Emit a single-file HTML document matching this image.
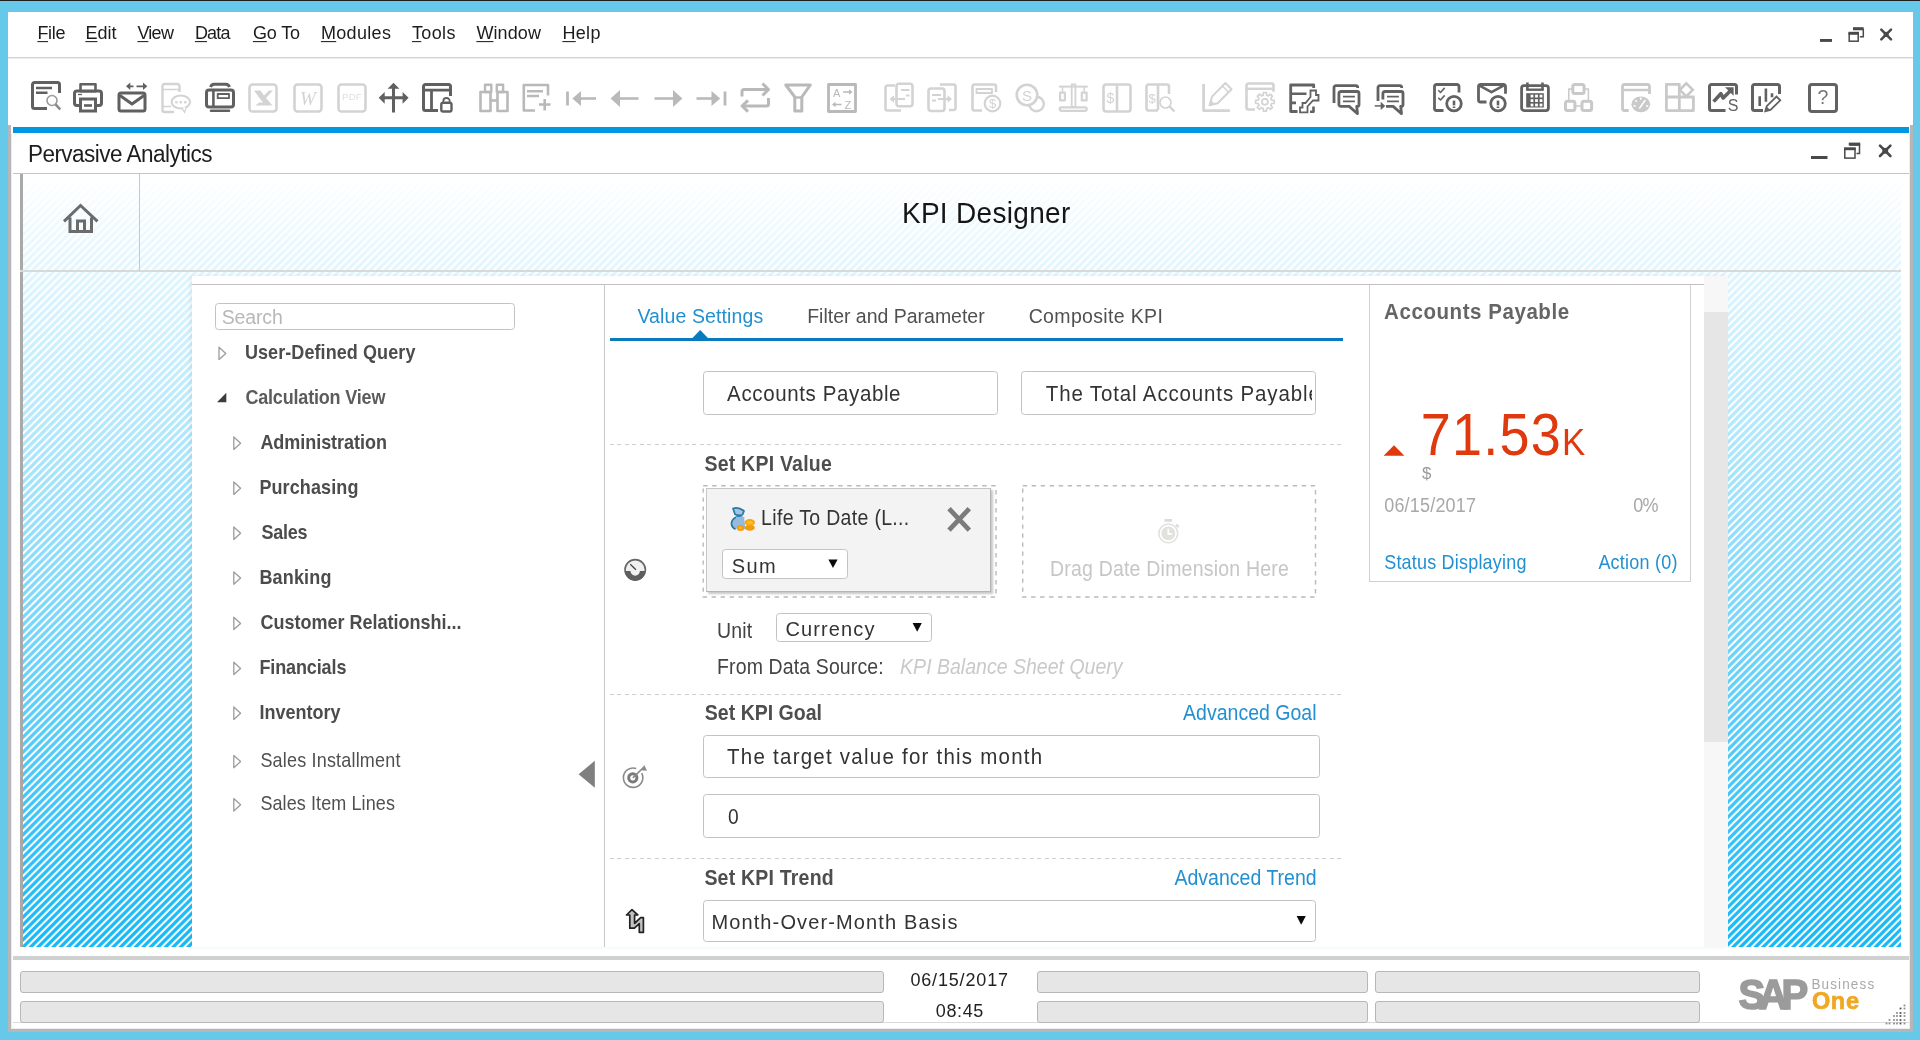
<!DOCTYPE html>
<html><head><meta charset="utf-8"><title>KPI Designer</title>
<style>
html,body{margin:0;padding:0}
body{width:1920px;height:1040px;overflow:hidden;background:#66c9ea;font-family:"Liberation Sans",sans-serif;position:relative}
.a{position:absolute}
.t{position:absolute;white-space:pre;line-height:1}
.t u{text-decoration:underline;text-decoration-thickness:1.2px;text-underline-offset:1.6px}
.ti{position:absolute}
.in{position:absolute;box-sizing:border-box;border:1.5px solid #c3c3c3;border-radius:3.5px;background:#fff}
.bar{position:absolute;box-sizing:border-box;border:1.8px solid #b5b7b9;border-radius:3px;background:#e6e6e6}
.dl{position:absolute;left:609.5px;width:733.5px;height:1px;background:repeating-linear-gradient(90deg,#cfcfcf 0,#cfcfcf 3.6px,rgba(255,255,255,0) 3.6px,rgba(255,255,255,0) 7.5px)}
#client{left:20px;top:174px;width:1881px;height:773px;background:repeating-linear-gradient(135deg,#fff 0,#fff .5px,rgba(255,255,255,0) 1.55px,rgba(255,255,255,0) 3.75px,#fff 4.8px,#fff 5.303px),linear-gradient(to bottom,#ffffff 0,#14b9f8 100%)}
</style></head><body>
<div class="a" style="left:0;top:0;width:1920px;height:1px;background:#1e1e1e"></div>
<div class="a" style="left:8px;top:12px;width:1905px;height:1020px;background:#fff"></div>
<div class="a" style="left:8px;top:57px;width:1905px;height:1px;background:#d3d3d3"></div>
<div class="a" style="left:8px;top:58px;width:1905px;height:1px;background:#ededed"></div>
<!-- window gray borders -->
<div class="a" style="left:8px;top:125px;width:3px;height:907px;background:#b6b6b6"></div>
<div class="a" style="left:11px;top:134px;width:1px;height:895px;background:#ececec"></div>
<div class="a" style="left:1910px;top:125px;width:3px;height:907px;background:#b6b6b6"></div>
<div class="a" style="left:1909px;top:134px;width:1px;height:895px;background:#ececec"></div>
<div class="a" style="left:8px;top:1029px;width:1905px;height:3px;background:#b6b6b6"></div>
<div class="a" style="left:11px;top:1028px;width:1899px;height:1px;background:#ececec"></div>
<!-- blue line + title line -->
<div class="a" style="left:12.500px;top:127.300px;width:1896px;height:6px;background:#0098e1"></div>
<div class="a" style="left:12.500px;top:173px;width:1896px;height:1px;background:#c4c4c4"></div>
<!-- client hatch -->
<div class="a" id="client"></div>
<div class="a" style="left:20px;top:174px;width:3px;height:773px;background:#a9a9a9"></div>
<div class="a" style="left:20px;top:270px;width:1881px;height:1.500px;background:#d9d9d9"></div>
<div class="a" style="left:139px;top:174px;width:1.200px;height:96px;background:#c8c8c8"></div>
<!-- home icon -->
<svg class="a" style="left:60px;top:200px" width="42" height="38" viewBox="60 200 42 38"><path d="M64 221.300L80.500 205.500 97.500 221.300M70 217.500V231.500H91.500V217.500M77.500 231.500V221H84.500V231.500" fill="none" stroke="#6b6b6b" stroke-width="3"/></svg>
<!-- panel -->
<div class="a" style="left:192px;top:276px;width:1536px;height:671px;background:#fff;box-shadow:-2px 0 4px rgba(0,60,90,.08)"></div>
<div class="a" style="left:192px;top:283.500px;width:1512px;height:1.500px;background:#c1c1c1"></div>
<div class="a" style="left:603.500px;top:285px;width:1.500px;height:662px;background:#c9c9c9"></div>
<div class="a" style="left:1704px;top:276px;width:24px;height:671px;background:#f7f7f7"></div>
<div class="a" style="left:1704px;top:312px;width:24px;height:430px;background:#e6e6e6"></div>
<!-- search -->
<div class="in" style="left:215px;top:303px;width:300px;height:27px"></div>
<svg class="a" style="left:214px;top:340px" width="32" height="475" viewBox="214 340 32 475"><path d="M219 347.2V359.6L225.8 353.4z" fill="#fff" stroke="#9c9c9c" stroke-width="1.3" stroke-linejoin="round"/><path d="M226.3 392.800V402.200H217z" fill="#3c3c3c"/><path d="M233.8 437.0V449.4L240.6 443.2z" fill="#fff" stroke="#9c9c9c" stroke-width="1.3" stroke-linejoin="round"/><path d="M233.8 482.0V494.4L240.6 488.2z" fill="#fff" stroke="#9c9c9c" stroke-width="1.3" stroke-linejoin="round"/><path d="M233.8 527.0V539.4L240.6 533.2z" fill="#fff" stroke="#9c9c9c" stroke-width="1.3" stroke-linejoin="round"/><path d="M233.8 571.9V584.3L240.6 578.1z" fill="#fff" stroke="#9c9c9c" stroke-width="1.3" stroke-linejoin="round"/><path d="M233.8 617.2V629.6L240.6 623.4z" fill="#fff" stroke="#9c9c9c" stroke-width="1.3" stroke-linejoin="round"/><path d="M233.8 662.2V674.6L240.6 668.4z" fill="#fff" stroke="#9c9c9c" stroke-width="1.3" stroke-linejoin="round"/><path d="M233.8 707.0V719.4L240.6 713.2z" fill="#fff" stroke="#9c9c9c" stroke-width="1.3" stroke-linejoin="round"/><path d="M233.8 755.4V767.8L240.6 761.6z" fill="#fff" stroke="#9c9c9c" stroke-width="1.3" stroke-linejoin="round"/><path d="M233.8 798.6V811.0L240.6 804.8z" fill="#fff" stroke="#9c9c9c" stroke-width="1.3" stroke-linejoin="round"/></svg>
<!-- collapse arrow -->
<svg class="a" style="left:576px;top:758px" width="22" height="32" viewBox="576 758 22 32"><path d="M578.600 774.300L594.800 760.800V787.800z" fill="#7f7f7f"/></svg>
<!-- tabs underline -->
<div class="a" style="left:609.500px;top:337.500px;width:733.500px;height:3px;background:#0a7abf"></div>
<svg class="a" style="left:690px;top:328px" width="22" height="12" viewBox="690 328 22 12"><path d="M692 338.500L700.200 330 708.400 338.500z" fill="#0a7abf"/></svg>
<!-- inputs -->
<div class="in" style="left:703px;top:371px;width:295px;height:44px"></div>
<div class="in" style="left:1020.800px;top:371px;width:295px;height:44px"></div>
<div class="dl" style="top:444px"></div>
<!-- dashed boxes -->
<svg class="a" style="left:700px;top:483px" width="620" height="118" viewBox="700 483 620 118"><g fill="none" stroke="#bababa" stroke-width="1.400" stroke-dasharray="4.400 4.600"><rect x="703.200" y="485.800" width="292.800" height="111.200"/><rect x="1022.700" y="485.800" width="292.800" height="111.200"/></g></svg>
<div class="a" style="left:706px;top:488px;width:284.500px;height:103.500px;box-sizing:border-box;background:#f3f3f3;border:1.500px solid #c6c6c6;border-right-color:#b4b4b4;border-bottom-color:#b4b4b4;box-shadow:1.500px 1.500px 2px rgba(0,0,0,.22)"></div>
<div class="in" style="left:722.300px;top:549.200px;width:125.400px;height:29.500px"></div>
<div class="in" style="left:776px;top:612.700px;width:155.700px;height:29px"></div>
<div class="dl" style="top:693.500px"></div>
<div class="in" style="left:703px;top:734.600px;width:616.700px;height:43px"></div>
<div class="in" style="left:703px;top:794px;width:616.700px;height:43.500px"></div>
<div class="dl" style="top:858.200px"></div>
<div class="in" style="left:703px;top:899.700px;width:612.800px;height:42.700px"></div>
<svg class="a" style="left:826px;top:557px" width="14" height="14" viewBox="826 557 14 14"><path d="M828.4 559.4H837.6L833.00 568.1z" fill="#0a0a0a"/></svg>
<svg class="a" style="left:910px;top:621px" width="14" height="14" viewBox="910 621 14 14"><path d="M912.6 623H921.8L917.20 631.7z" fill="#0a0a0a"/></svg>
<svg class="a" style="left:1294px;top:914px" width="14" height="14" viewBox="1294 914 14 14"><path d="M1296.6 916H1305.8L1301.20 924.7z" fill="#0a0a0a"/></svg>
<svg class="a" style="left:944px;top:504px" width="30" height="31" viewBox="944 504 30 31"><path d="M949 508.700L969.300 530.200M969.300 508.700L949 530.200" stroke="#7b7b7b" stroke-width="4.800" fill="none"/></svg>
<svg class="a" style="left:622px;top:557px" width="27" height="27" viewBox="622 557 27 27"><circle cx="635.200" cy="569.800" r="10.200" fill="#f0f0f0" stroke="#666" stroke-width="1.600"/>
<path d="M625.300 571h5.200a4.700 4.700 0 0 0 9.400 0h5.200a9.900 9.900 0 0 1-19.800 0z" fill="#5e5e5e"/>
<path d="M630.300 564.300l5.600 5.400" stroke="#444" stroke-width="1.300" fill="none"/></svg>
<svg class="a" style="left:620px;top:762px" width="30" height="28" viewBox="620 762 30 28"><path d="M641.700 773.200a9.700 9.700 0 1 1-5.500-4.700" fill="none" stroke="#8a8a8a" stroke-width="1.600"/>
<circle cx="632.800" cy="777.800" r="4.100" fill="none" stroke="#7a7a7a" stroke-width="3"/>
<path d="M632.800 777.800L643.500 767.500" stroke="#8a8a8a" stroke-width="1.600" fill="none"/><path d="M644.300 765l2.700 5.700-6-.5z" fill="#8a8a8a"/></svg>
<svg class="a" style="left:623px;top:906px" width="24" height="30" viewBox="623 906 24 30"><path d="M632 909.700L637.800 915H634.600V923.300L640.600 917.700H643.400V932.300H639.300V923.600L634.400 928.200H629.800V915H626.500z" fill="#c2c2c2" stroke="#222" stroke-width="1.700" stroke-linejoin="round"/></svg>
<svg class="a" style="left:728px;top:504px" width="30" height="30" viewBox="728 504 30 30"><path d="M733 508.500q5.500-2 11 2.500l-1.500 3.700q-4 1.500-7.500-.5z" fill="#a3c3e2" stroke="#2878a6" stroke-width="1.700" stroke-linejoin="round"/>
<path d="M744 518.200q-2.500-2-7.500-1.200-5.500 2.500-5 7.500.5 3 4 4.800" fill="#96badd" stroke="#2878a6" stroke-width="1.700"/>
<path d="M736 517h8l1.500 12h-9z" fill="#96badd"/>
<ellipse cx="749.800" cy="527.700" rx="5" ry="3" fill="#f29a0e"/><ellipse cx="749.800" cy="522.400" rx="5.200" ry="3.400" fill="#f7a614"/><ellipse cx="749.800" cy="522.600" rx="3" ry="1.700" fill="#fcc419"/>
<ellipse cx="740.600" cy="528" rx="3.800" ry="2.900" fill="#f49c0e"/><ellipse cx="740.300" cy="528" rx="1.500" ry="1.200" fill="#fcc419"/></svg>
<svg class="a" style="left:1155px;top:516px" width="27" height="28" viewBox="1155 516 27 28"><circle cx="1168.300" cy="533.400" r="9.400" fill="none" stroke="#e1e1dd" stroke-width="1.600"/><circle cx="1168.300" cy="533.400" r="6.900" fill="#e1e1dd"/>
<rect x="1164.400" y="519" width="7.600" height="2.800" fill="#dcdcd7"/><path d="M1176 524.500l2.600 2.600" stroke="#dcdcd7" stroke-width="2.400"/>
<path d="M1168.300 528.700v5.200h3.800" fill="none" stroke="#fff" stroke-width="1.800"/></svg>
<!-- KPI card -->
<div class="a" style="left:1368.500px;top:285px;width:322.500px;height:297px;box-sizing:border-box;border:1.500px solid #d0d0d0;border-top:none"></div>
<svg class="a" style="left:1380px;top:442px" width="28" height="16" viewBox="1380 442 28 16"><path d="M1383.600 455.700H1404.400L1394 445.300z" fill="#e0390d"/></svg>
<!-- status area -->
<div class="a" style="left:12.500px;top:955.500px;width:1896.500px;height:4.500px;background:#cfd1d1"></div>
<div class="a" style="left:12.500px;top:1022px;width:1896px;height:1px;background:#dadada"></div>
<div class="bar" style="left:20px;top:971px;width:863.500px;height:21.700px"></div>
<div class="bar" style="left:20px;top:1001px;width:863.500px;height:21.700px"></div>
<div class="bar" style="left:1037px;top:971px;width:331px;height:21.700px"></div>
<div class="bar" style="left:1037px;top:1001px;width:331px;height:21.700px"></div>
<div class="bar" style="left:1374.600px;top:971px;width:325px;height:21.700px"></div>
<div class="bar" style="left:1374.600px;top:1001px;width:325px;height:21.700px"></div>
<svg class="a" style="left:1884px;top:1003px" width="24" height="24" viewBox="1884 1003 24 24"><rect x="1903.6" y="1004.6" width="1.800" height="1.800" fill="#333" opacity="0.55"/><rect x="1899.6" y="1007.6" width="1.800" height="1.800" fill="#333" opacity="0.85"/><rect x="1903.6" y="1007.6" width="1.800" height="1.800" fill="#333" opacity="0.55"/><rect x="1896.1" y="1012.1" width="1.800" height="1.800" fill="#333" opacity="0.55"/><rect x="1899.6" y="1012.1" width="1.800" height="1.800" fill="#333" opacity="0.85"/><rect x="1903.6" y="1012.1" width="1.800" height="1.800" fill="#333" opacity="0.55"/><rect x="1893.1" y="1015.1" width="1.800" height="1.800" fill="#333" opacity="0.55"/><rect x="1896.1" y="1015.1" width="1.800" height="1.800" fill="#333" opacity="0.55"/><rect x="1899.6" y="1015.1" width="1.800" height="1.800" fill="#333" opacity="0.85"/><rect x="1903.6" y="1015.1" width="1.800" height="1.800" fill="#333" opacity="0.55"/><rect x="1888.6" y="1019.1" width="1.800" height="1.800" fill="#333" opacity="0.55"/><rect x="1893.1" y="1019.1" width="1.800" height="1.800" fill="#333" opacity="0.55"/><rect x="1896.1" y="1019.1" width="1.800" height="1.800" fill="#333" opacity="0.55"/><rect x="1899.6" y="1019.1" width="1.800" height="1.800" fill="#333" opacity="0.85"/><rect x="1903.6" y="1019.1" width="1.800" height="1.800" fill="#333" opacity="0.55"/><rect x="1885.6" y="1022.6" width="1.800" height="1.800" fill="#333" opacity="0.55"/><rect x="1888.6" y="1022.6" width="1.800" height="1.800" fill="#333" opacity="0.55"/><rect x="1893.1" y="1022.6" width="1.800" height="1.800" fill="#333" opacity="0.55"/><rect x="1896.1" y="1022.6" width="1.800" height="1.800" fill="#333" opacity="0.55"/><rect x="1899.6" y="1022.6" width="1.800" height="1.800" fill="#333" opacity="0.85"/><rect x="1903.6" y="1022.6" width="1.800" height="1.800" fill="#333" opacity="0.55"/></svg>
<svg class="a" style="left:1816px;top:24px" width="80" height="20" viewBox="1816 24 80 20"><rect x="1820" y="39" width="12" height="2.900" fill="#494949"/>
<path d="M1853.300 29.500h10v7.200h-3.500" fill="none" stroke="#494949" stroke-width="1.500"/><rect x="1853" y="27.200" width="10.600" height="2.800" fill="#494949"/>
<rect x="1849.200" y="33.500" width="9" height="7.700" fill="#fff" stroke="#494949" stroke-width="1.500"/><rect x="1848.450" y="31.800" width="10.500" height="2.900" fill="#494949"/>
<path d="M1881.300 29.600L1891 39.300M1891 29.600L1881.300 39.300" stroke="#494949" stroke-width="2.500" stroke-linecap="round"/><rect x="1883.600" y="31.900" width="5.100" height="5.100" fill="#494949"/></svg>
<svg class="a" style="left:1808px;top:140px" width="90" height="22" viewBox="1808 140 90 22"><rect x="1811" y="156" width="16.500" height="3" fill="#494949"/>
<path d="M1849.500 145h10v8.500h-3" fill="none" stroke="#494949" stroke-width="1.500"/><rect x="1848.750" y="142.600" width="11.500" height="2.900" fill="#494949"/>
<rect x="1844.800" y="149" width="10.200" height="9.100" fill="#fff" stroke="#494949" stroke-width="1.500"/><rect x="1844.050" y="147.300" width="11.700" height="2.900" fill="#494949"/>
<path d="M1880 145.600L1890.400 156M1890.400 145.600L1880 156" stroke="#494949" stroke-width="2.600" stroke-linecap="round"/><rect x="1882.300" y="147.900" width="5.800" height="5.800" fill="#494949"/></svg>
<div style="position:absolute;left:0;top:60px;width:1920px;height:64px;will-change:transform">
<svg class="ti" style="left:30.6px;top:20.400000000000006px;color:#606060" width="30" height="31" viewBox="0 0 30 31" overflow="visible"><path d="M28.5 13V4.5a2 2 0 0 0-2-2H3.5a2 2 0 0 0-2 2v22a2 2 0 0 0 2 2H16" fill="none" stroke="currentColor" stroke-width="3" stroke-linejoin="round" stroke-linecap="butt"/>
<path d="M5 8h16M5 12.7h11.5" fill="none" stroke="currentColor" stroke-width="2.6" stroke-linejoin="round" stroke-linecap="butt"/>
<circle cx="21" cy="20.5" r="5" fill="none" stroke="#9a9a9a" stroke-width="1.6"/>
<path d="M24.6 24.3L29.3 29.5" stroke="#8a8a8a" stroke-width="2.6" fill="none"/></svg>
<svg class="ti" style="left:73px;top:22px;color:#606060" width="30" height="31" viewBox="0 0 30 31" overflow="visible"><rect x="7.5" y="2.2" width="15" height="7" fill="none" stroke="currentColor" stroke-width="2.6" stroke-linejoin="round" stroke-linecap="butt"/>
<rect x="1.5" y="9" width="27" height="14.5" rx="2.5" fill="none" stroke="currentColor" stroke-width="3" stroke-linejoin="round" stroke-linecap="butt"/>
<rect x="7.5" y="17" width="15" height="12" fill="#fff" stroke="currentColor" stroke-width="3"/>
<path d="M11 23.5h8" fill="none" stroke="currentColor" stroke-width="2.6" stroke-linejoin="round" stroke-linecap="butt"/><path d="M5 12.5h4" stroke="currentColor" stroke-width="1.3"/></svg>
<svg class="ti" style="left:117px;top:22px;color:#606060" width="30" height="31" viewBox="0 0 30 31" overflow="visible"><rect x="2" y="11" width="26" height="18" rx="2" fill="none" stroke="currentColor" stroke-width="3" stroke-linejoin="round" stroke-linecap="butt"/>
<path d="M3 13.5l12 8.5 12-8.500" fill="none" stroke="currentColor" stroke-width="3" stroke-linejoin="round" stroke-linecap="butt"/>
<path d="M11 4.300h5.500M19.500 4.300h7.500" fill="none" stroke="currentColor" stroke-width="1.8" stroke-linejoin="round" stroke-linecap="butt"/>
<path d="M9 4.300l4.300-3.700v7.400zM30.300 4.300l-4.300-3.700v7.400z" fill="currentColor"/></svg>
<svg class="ti" style="left:161px;top:22px;color:#d3d3d3" width="30" height="31" viewBox="0 0 30 31" overflow="visible"><path d="M18.5 10V4a2 2 0 0 0-2-2H3.5a2 2 0 0 0-2 2v24a2 2 0 0 0 2 2H13" fill="none" stroke="currentColor" stroke-width="2.4" stroke-linejoin="round" stroke-linecap="butt"/>
<path d="M2 7.5h16M2 24.5h8" fill="none" stroke="currentColor" stroke-width="1.6" stroke-linejoin="round" stroke-linecap="butt"/>
<path d="M21 26l2.500 4 1.500-4.500z" fill="#fff" stroke="currentColor" stroke-width="1.600"/>
<ellipse cx="19.800" cy="20" rx="9.200" ry="6.500" fill="#fff" stroke="currentColor" stroke-width="2"/>
<path d="M21.500 25.800l2 3 1-3.800z" fill="#fff"/>
<circle cx="15.300" cy="20.300" r="1.300" fill="currentColor"/><circle cx="19.800" cy="20.300" r="1.300" fill="currentColor"/><circle cx="24.300" cy="20.300" r="1.300" fill="currentColor"/></svg>
<svg class="ti" style="left:205px;top:22px;color:#606060" width="30" height="31" viewBox="0 0 30 31" overflow="visible"><rect x="1.5" y="8" width="27" height="17" rx="2.6" fill="none" stroke="currentColor" stroke-width="3" stroke-linejoin="round" stroke-linecap="butt"/>
<path d="M8.4 8.5v16" fill="none" stroke="currentColor" stroke-width="2.6" stroke-linejoin="round" stroke-linecap="butt"/>
<rect x="12.7" y="12" width="11.3" height="4.2" fill="none" stroke="currentColor" stroke-width="1.8" stroke-linejoin="round" stroke-linecap="butt"/>
<path d="M5.5 5Q6.5 2.200 9 2.200h12q2.500 0 3.500 2.800" fill="none" stroke="currentColor" stroke-width="3" stroke-linejoin="round" stroke-linecap="butt"/><path d="M6 28.7h18" stroke="currentColor" stroke-width="2.6" stroke-linecap="round"/></svg>
<svg class="ti" style="left:248px;top:22px;color:#d3d3d3" width="30" height="31" viewBox="0 0 30 31" overflow="visible"><rect x="1.5" y="2.5" width="27" height="27" rx="3" fill="none" stroke="currentColor" stroke-width="2.6" stroke-linejoin="round" stroke-linecap="butt"/>
<path d="M6 8.5h6.5l3.5 5 5-5H25l-7 7.5 6.5 7.5H7.500l3.500-3h4L11.500 16z" fill="currentColor"/></svg>
<svg class="ti" style="left:293px;top:22px;color:#d3d3d3" width="30" height="31" viewBox="0 0 30 31" overflow="visible"><rect x="1.5" y="2.500" width="27" height="27" rx="3" fill="none" stroke="currentColor" stroke-width="2.6" stroke-linejoin="round" stroke-linecap="butt"/>
<text x="15" y="22.500" font-family="Liberation Serif" font-style="italic" font-size="19" text-anchor="middle" fill="currentColor">W</text></svg>
<svg class="ti" style="left:337px;top:22px;color:#d3d3d3" width="30" height="31" viewBox="0 0 30 31" overflow="visible"><rect x="1.500" y="2.500" width="27" height="27" rx="3" fill="none" stroke="currentColor" stroke-width="2.6" stroke-linejoin="round" stroke-linecap="butt"/>
<text x="15" y="18.300" font-family="Liberation Sans" font-size="9.5" text-anchor="middle" fill="#dedede" letter-spacing="0.3">PDF</text></svg>
<svg class="ti" style="left:378px;top:22px;color:#606060" width="30" height="31" viewBox="0 0 30 31" overflow="visible"><path d="M15.500 5v25.500M4 15.800h23" fill="none" stroke="currentColor" stroke-width="3" stroke-linejoin="round" stroke-linecap="butt"/>
<path d="M15.500 .8l5.900 6H9.600zM.700 15.800l6-5.900v11.800zM30.600 15.800l-6-5.900v11.800z" fill="currentColor"/></svg>
<svg class="ti" style="left:422px;top:22px;color:#606060" width="30" height="31" viewBox="0 0 30 31" overflow="visible"><path d="M28.500 14V4.500a2 2 0 0 0-2-2H3.500a2 2 0 0 0-2 2v22a2 2 0 0 0 2 2H16" fill="none" stroke="currentColor" stroke-width="3" stroke-linejoin="round" stroke-linecap="butt"/>
<path d="M2 8.200h26M9.500 8.500v20" fill="none" stroke="currentColor" stroke-width="2.8" stroke-linejoin="round" stroke-linecap="butt"/>
<path d="M21.300 20.500v-1.300a3.200 3.200 0 0 1 6.400 0v1.300" fill="none" stroke="currentColor" stroke-width="1.8" stroke-linejoin="round" stroke-linecap="butt"/>
<rect x="19.300" y="20.700" width="10.200" height="8.800" rx="1.800" fill="#fff" stroke="currentColor" stroke-width="2.400"/></svg>
<svg class="ti" style="left:479px;top:22px;color:#b9b9b9" width="30" height="31" viewBox="0 0 30 31" overflow="visible"><rect x="1.500" y="10" width="10" height="19" fill="none" stroke="currentColor" stroke-width="2.6" stroke-linejoin="round" stroke-linecap="butt"/><rect x="18.500" y="10" width="10" height="19" fill="none" stroke="currentColor" stroke-width="2.6" stroke-linejoin="round" stroke-linecap="butt"/>
<rect x="6" y="2.700" width="6.300" height="7.300" fill="none" stroke="currentColor" stroke-width="2.4" stroke-linejoin="round" stroke-linecap="butt"/><rect x="17.800" y="2.700" width="6.300" height="7.300" fill="none" stroke="currentColor" stroke-width="2.4" stroke-linejoin="round" stroke-linecap="butt"/>
<path d="M11.500 18.500h7" fill="none" stroke="currentColor" stroke-width="2.6" stroke-linejoin="round" stroke-linecap="butt"/></svg>
<svg class="ti" style="left:522px;top:22px;color:#b9b9b9" width="30" height="31" viewBox="0 0 30 31" overflow="visible"><path d="M26 13.500V3H1.800v25.500H13" fill="none" stroke="currentColor" stroke-width="2.6" stroke-linejoin="round" stroke-linecap="butt"/>
<path d="M5 9.300h16M5 14h12" fill="none" stroke="currentColor" stroke-width="2.4" stroke-linejoin="round" stroke-linecap="butt"/><path d="M17 22.500h11.500M22.700 17v11.500" fill="none" stroke="currentColor" stroke-width="2.6" stroke-linejoin="round" stroke-linecap="butt"/></svg>
<svg class="ti" style="left:566px;top:22px;color:#b9b9b9" width="30" height="31" viewBox="0 0 30 31" overflow="visible"><path d="M1.500 9.500v14" fill="none" stroke="currentColor" stroke-width="2.8" stroke-linejoin="round" stroke-linecap="butt"/><path d="M12 16.500h18" fill="none" stroke="currentColor" stroke-width="2.6" stroke-linejoin="round" stroke-linecap="butt"/><path d="M6.300 16.500l8.700-7.500v15z" fill="currentColor"/></svg>
<svg class="ti" style="left:610px;top:22px;color:#b9b9b9" width="30" height="31" viewBox="0 0 30 31" overflow="visible"><path d="M8 16.500h20.500" fill="none" stroke="currentColor" stroke-width="2.6" stroke-linejoin="round" stroke-linecap="butt"/><path d="M.600 16.500l9.400-8.500v17z" fill="currentColor"/></svg>
<svg class="ti" style="left:654px;top:22px;color:#b9b9b9" width="30" height="31" viewBox="0 0 30 31" overflow="visible"><path d="M.500 16.500h20.500" fill="none" stroke="currentColor" stroke-width="2.6" stroke-linejoin="round" stroke-linecap="butt"/><path d="M28.400 16.500l-9.400-8.500v17z" fill="currentColor"/></svg>
<svg class="ti" style="left:696px;top:22px;color:#b9b9b9" width="30" height="31" viewBox="0 0 30 31" overflow="visible"><path d="M29 9.500v14" fill="none" stroke="currentColor" stroke-width="2.8" stroke-linejoin="round" stroke-linecap="butt"/><path d="M.500 16.500h18" fill="none" stroke="currentColor" stroke-width="2.6" stroke-linejoin="round" stroke-linecap="butt"/><path d="M24.200 16.500l-8.700-7.500v15z" fill="currentColor"/></svg>
<svg class="ti" style="left:740px;top:22px;color:#b9b9b9" width="30" height="31" viewBox="0 0 30 31" overflow="visible"><path d="M2 14.500V9.500a2 2 0 0 1 2-2h23" fill="none" stroke="currentColor" stroke-width="3" stroke-linejoin="round" stroke-linecap="butt"/><path d="M22.500 1.500l6 6-6 6" fill="none" stroke="currentColor" stroke-width="3" stroke-linejoin="round" stroke-linecap="butt"/>
<path d="M28.500 16v6a2 2 0 0 1-2 2H3.500" fill="none" stroke="currentColor" stroke-width="3" stroke-linejoin="round" stroke-linecap="butt"/><path d="M8 18.300l-6 5.700 6 5.700" fill="none" stroke="currentColor" stroke-width="3" stroke-linejoin="round" stroke-linecap="butt"/></svg>
<svg class="ti" style="left:783px;top:22px;color:#b9b9b9" width="30" height="31" viewBox="0 0 30 31" overflow="visible"><path d="M2.800 3h24.500L18.800 15v14h-7V15z" fill="none" stroke="currentColor" stroke-width="3" stroke-linejoin="round" stroke-linecap="butt"/><path d="M11.500 15.500h7" fill="none" stroke="currentColor" stroke-width="2.4" stroke-linejoin="round" stroke-linecap="butt"/></svg>
<svg class="ti" style="left:827px;top:22px;color:#b9b9b9" width="30" height="31" viewBox="0 0 30 31" overflow="visible"><rect x="1.500" y="2.500" width="27" height="27" fill="none" stroke="currentColor" stroke-width="2.8" stroke-linejoin="round" stroke-linecap="butt"/>
<text x="6" y="14.500" font-family="Liberation Sans" font-size="11" fill="currentColor">A</text>
<text x="17.500" y="27" font-family="Liberation Sans" font-size="11" fill="currentColor">Z</text>
<path d="M16 10h8M6.500 22.500h8" fill="none" stroke="currentColor" stroke-width="1.5" stroke-linejoin="round" stroke-linecap="butt"/><path d="M25.500 10l-3.500-2.800v5.600zM5 22.500l3.500-2.800v5.600z" fill="currentColor"/></svg>
<svg class="ti" style="left:884px;top:22px;color:#d3d3d3" width="30" height="31" viewBox="0 0 30 31" overflow="visible"><path d="M11 3.500H3.500a2 2 0 0 0-2 2v21a2 2 0 0 0 2 2H17" fill="none" stroke="currentColor" stroke-width="2.6" stroke-linejoin="round" stroke-linecap="butt"/>
<rect x="12.500" y="1.800" width="16" height="22.500" rx="2.500" fill="none" stroke="currentColor" stroke-width="2.6" stroke-linejoin="round" stroke-linecap="butt"/>
<path d="M17 8h8.500M22 13.500h3.500" fill="none" stroke="currentColor" stroke-width="2.2" stroke-linejoin="round" stroke-linecap="butt"/><path d="M9 17h12" fill="none" stroke="currentColor" stroke-width="2" stroke-linejoin="round" stroke-linecap="butt"/><path d="M5.500 17l4.500-3.800v7.600z" fill="currentColor"/></svg>
<svg class="ti" style="left:927px;top:22px;color:#d3d3d3" width="30" height="31" viewBox="0 0 30 31" overflow="visible"><path d="M13 2.500h13.500a2 2 0 0 1 2 2v21.500a2 2 0 0 1-2 2H22" fill="none" stroke="currentColor" stroke-width="2.6" stroke-linejoin="round" stroke-linecap="butt"/>
<rect x="1.500" y="6.500" width="16" height="22.500" rx="2.500" fill="none" stroke="currentColor" stroke-width="2.6" stroke-linejoin="round" stroke-linecap="butt"/>
<path d="M5 13h9M5 18.500h4" fill="none" stroke="currentColor" stroke-width="2.2" stroke-linejoin="round" stroke-linecap="butt"/><path d="M11 17h10" fill="none" stroke="currentColor" stroke-width="2" stroke-linejoin="round" stroke-linecap="butt"/><path d="M25 17l-4.500-3.800v7.600z" fill="currentColor"/></svg>
<svg class="ti" style="left:971px;top:22px;color:#d3d3d3" width="30" height="31" viewBox="0 0 30 31" overflow="visible"><path d="M25 10V4.500a2 2 0 0 0-2-2H3.500a2 2 0 0 0-2 2v22a2 2 0 0 0 2 2H11" fill="none" stroke="currentColor" stroke-width="2.6" stroke-linejoin="round" stroke-linecap="butt"/>
<rect x="5.500" y="7" width="15.500" height="4" fill="none" stroke="currentColor" stroke-width="1.8" stroke-linejoin="round" stroke-linecap="butt"/>
<circle cx="21.500" cy="21.500" r="7.800" fill="#fff" stroke="currentColor" stroke-width="2.200"/>
<text x="21.500" y="26.300" font-family="Liberation Sans" font-size="13" text-anchor="middle" fill="currentColor">$</text></svg>
<svg class="ti" style="left:1015px;top:22px;color:#d3d3d3" width="30" height="31" viewBox="0 0 30 31" overflow="visible"><circle cx="21.500" cy="22" r="7.300" fill="none" stroke="currentColor" stroke-width="2.4" stroke-linejoin="round" stroke-linecap="butt"/>
<circle cx="12" cy="13" r="10.300" fill="#fff" stroke="currentColor" stroke-width="2.600"/>
<text x="12" y="18.500" font-family="Liberation Sans" font-size="15" text-anchor="middle" fill="currentColor">S</text></svg>
<svg class="ti" style="left:1058px;top:22px;color:#d3d3d3" width="30" height="31" viewBox="0 0 30 31" overflow="visible"><rect x="13.700" y="2.300" width="3.700" height="22.500" fill="none" stroke="currentColor" stroke-width="1.8" stroke-linejoin="round" stroke-linecap="butt"/><path d="M1 4.600H29.800" fill="none" stroke="currentColor" stroke-width="2" stroke-linejoin="round" stroke-linecap="butt"/>
<path d="M4.500 4.600V10M26.200 4.600V10" fill="none" stroke="currentColor" stroke-width="1.5" stroke-linejoin="round" stroke-linecap="butt"/>
<rect x="2.100" y="10.600" width="4.800" height="7.800" fill="none" stroke="currentColor" stroke-width="2.2" stroke-linejoin="round" stroke-linecap="butt"/><rect x="23.800" y="10.600" width="4.800" height="7.800" fill="none" stroke="currentColor" stroke-width="2.2" stroke-linejoin="round" stroke-linecap="butt"/>
<rect x="1.700" y="25.300" width="27" height="3.500" rx="1.700" fill="none" stroke="currentColor" stroke-width="2.2" stroke-linejoin="round" stroke-linecap="butt"/></svg>
<svg class="ti" style="left:1102px;top:22px;color:#d3d3d3" width="30" height="31" viewBox="0 0 30 31" overflow="visible"><rect x="1.500" y="2.500" width="27" height="27" rx="2.500" fill="none" stroke="currentColor" stroke-width="2.6" stroke-linejoin="round" stroke-linecap="butt"/><path d="M15 3v26" fill="none" stroke="currentColor" stroke-width="2.6" stroke-linejoin="round" stroke-linecap="butt"/>
<text x="8.300" y="21" font-family="Liberation Sans" font-size="14" text-anchor="middle" fill="currentColor">$</text></svg>
<svg class="ti" style="left:1145px;top:22px;color:#d3d3d3" width="30" height="31" viewBox="0 0 30 31" overflow="visible"><path d="M24 12V4.500a2 2 0 0 0-2-2H3.500a2 2 0 0 0-2 2v22a2 2 0 0 0 2 2H13" fill="none" stroke="currentColor" stroke-width="2.6" stroke-linejoin="round" stroke-linecap="butt"/><path d="M13 3v25" fill="none" stroke="currentColor" stroke-width="2.6" stroke-linejoin="round" stroke-linecap="butt"/>
<text x="7.200" y="20.500" font-family="Liberation Sans" font-size="13" text-anchor="middle" fill="currentColor">$</text>
<circle cx="20.500" cy="20.500" r="5.500" fill="#fff" stroke="currentColor" stroke-width="1.600"/><path d="M24.500 24.500l5 5" fill="none" stroke="currentColor" stroke-width="2.4" stroke-linejoin="round" stroke-linecap="butt"/></svg>
<svg class="ti" style="left:1202px;top:22px;color:#d3d3d3" width="30" height="31" viewBox="0 0 30 31" overflow="visible"><path d="M1.600 2v26.600h26.200" fill="none" stroke="currentColor" stroke-width="2.8" stroke-linejoin="round" stroke-linecap="butt"/>
<path d="M23.400 1L29.600 7.200 15.600 21.200 7.500 23.300 10.200 14.400z" fill="none" stroke="currentColor" stroke-width="2" stroke-linejoin="round" stroke-linecap="butt"/><path d="M7.500 23.300l5.300-1.400-3.900-3.900z" fill="currentColor"/>
<path d="M20.400 4l6.200 6.200" fill="none" stroke="currentColor" stroke-width="1.4" stroke-linejoin="round" stroke-linecap="butt"/></svg>
<svg class="ti" style="left:1245.4px;top:21.400000000000006px;color:#d3d3d3" width="30" height="31" viewBox="0 0 30 31" overflow="visible"><path d="M28.500 10.800V4.500a2 2 0 0 0-2-2H3.500a2 2 0 0 0-2 2v22a2 2 0 0 0 2 2H10" fill="none" stroke="currentColor" stroke-width="2.6" stroke-linejoin="round" stroke-linecap="butt"/><path d="M2 7.800h26" fill="none" stroke="currentColor" stroke-width="2.4" stroke-linejoin="round" stroke-linecap="butt"/>
<path d="M26.6 19.1L29.2 19.3L29.2 22.3L26.6 22.5L25.8 24.4L27.5 26.3L25.4 28.4L23.5 26.7L21.6 27.5L21.4 30.1L18.4 30.1L18.2 27.5L16.3 26.7L14.4 28.4L12.3 26.3L14.0 24.4L13.2 22.5L10.6 22.3L10.6 19.3L13.2 19.1L14.0 17.2L12.3 15.3L14.4 13.2L16.3 14.9L18.2 14.1L18.4 11.5L21.4 11.5L21.6 14.1L23.5 14.9L25.4 13.2L27.5 15.3L25.8 17.2z" fill="#fff" stroke="currentColor" stroke-width="1.700" stroke-linejoin="round"/>
<circle cx="19.900" cy="20.800" r="3" fill="#fff" stroke="currentColor" stroke-width="1.700"/></svg>
<svg class="ti" style="left:1289px;top:22.5px;color:#626262" width="30" height="31" viewBox="0 0 30 31" overflow="visible"><path d="M24.700 5V2H1.700V28.500H8.500" fill="none" stroke="currentColor" stroke-width="2.8" stroke-linejoin="round" stroke-linecap="butt"/><path d="M24.500 23.500V28.800H21" fill="none" stroke="currentColor" stroke-width="2.6" stroke-linejoin="round" stroke-linecap="butt"/>
<path d="M2 10.700H17.500M2 19.900H7" fill="none" stroke="currentColor" stroke-width="2.6" stroke-linejoin="round" stroke-linecap="butt"/>
<path d="M11 29.300V24.500H13.500V20H16.500L21.500 14V7.500H27V12H29.500V17.500H24L18.500 23.500V29.300z" fill="#fff" stroke="currentColor" stroke-width="1.800" stroke-linejoin="miter"/></svg>
<svg class="ti" style="left:1332px;top:23px;color:#626262" width="30" height="31" viewBox="0 0 30 31" overflow="visible"><path d="M2 19.900V4.600a2 2 0 0 1 2-2h19.700a2 2 0 0 1 2 2V5" fill="none" stroke="currentColor" stroke-width="2.8" stroke-linejoin="round" stroke-linecap="butt"/>
<path d="M8.900 8.500h16.100a2 2 0 0 1 2 2V21.400a2 2 0 0 1-2 2h-.300l.800 7.300-8.300-7.300H8.900a2 2 0 0 1-2-2V10.500a2 2 0 0 1 2-2z" fill="#fff" stroke="currentColor" stroke-width="2.800" stroke-linejoin="round"/>
<path d="M11 13.700h11.900M11 18.300h11.900" fill="none" stroke="currentColor" stroke-width="1.8" stroke-linejoin="round" stroke-linecap="butt"/></svg>
<svg class="ti" style="left:1375.6px;top:23px;color:#626262" width="30" height="31" viewBox="0 0 30 31" overflow="visible"><path d="M2 18V4.600a2 2 0 0 1 2-2h19.700a2 2 0 0 1 2 2V5" fill="none" stroke="currentColor" stroke-width="2.8" stroke-linejoin="round" stroke-linecap="butt"/>
<path d="M8.900 8.500h16.100a2 2 0 0 1 2 2V21.400a2 2 0 0 1-2 2h-.300l.800 7.300-8.300-7.300H8.900a2 2 0 0 1-2-2V10.500a2 2 0 0 1 2-2z" fill="#fff" stroke="currentColor" stroke-width="2.800" stroke-linejoin="round"/>
<rect x="4" y="16.500" width="6" height="10" fill="#fff"/>
<path d="M11 13.700h11.900M11 18.300h11.900" fill="none" stroke="currentColor" stroke-width="1.8" stroke-linejoin="round" stroke-linecap="butt"/><path d="M-1.300 22.900h7" fill="none" stroke="currentColor" stroke-width="1.5" stroke-linejoin="round" stroke-linecap="butt"/><path d="M9.300 22.900l-4.600-4.200v8.400z" fill="currentColor"/></svg>
<svg class="ti" style="left:1433px;top:22.400000000000006px;color:#626262" width="30" height="31" viewBox="0 0 30 31" overflow="visible"><path d="M26 10.400V4.500a2 2 0 0 0-2-2H3.500a2 2 0 0 0-2 2v22a2 2 0 0 0 2 2H10.500" fill="none" stroke="currentColor" stroke-width="2.8" stroke-linejoin="round" stroke-linecap="butt"/>
<path d="M5.300 8.300l2.200 2.200 4.200-4.600M5.300 15.800l2.200 2.200 4.200-4.600" fill="none" stroke="currentColor" stroke-width="1.6" stroke-linejoin="round" stroke-linecap="butt"/>
<circle cx="21" cy="21.600" r="7.300" fill="#fff" stroke="currentColor" stroke-width="2.800"/><path d="M21 18.600v4.800" fill="none" stroke="currentColor" stroke-width="2.600"/><rect x="19.700" y="24.500" width="2.600" height="1.500" fill="currentColor"/></svg>
<svg class="ti" style="left:1477px;top:22.400000000000006px;color:#626262" width="30" height="31" viewBox="0 0 30 31" overflow="visible"><path d="M28.500 11.700V4.500a2 2 0 0 0-2-2H3.500a2 2 0 0 0-2 2v13.500a2 2 0 0 0 2 2H9.500" fill="none" stroke="currentColor" stroke-width="2.8" stroke-linejoin="round" stroke-linecap="butt"/>
<path d="M2.500 3.600l12 6.600 12-6.600" fill="none" stroke="currentColor" stroke-width="2.6" stroke-linejoin="round" stroke-linecap="butt"/>
<circle cx="21" cy="21.600" r="7.300" fill="#fff" stroke="currentColor" stroke-width="2.800"/><path d="M21 18.600v4.800" fill="none" stroke="currentColor" stroke-width="2.600"/><rect x="19.700" y="24.500" width="2.600" height="1.500" fill="currentColor"/></svg>
<svg class="ti" style="left:1520px;top:22px;color:#626262" width="30" height="31" viewBox="0 0 30 31" overflow="visible"><rect x="1.600" y="3.600" width="26.800" height="25" rx="2.500" fill="none" stroke="currentColor" stroke-width="2.8" stroke-linejoin="round" stroke-linecap="butt"/><path d="M7.400 .500V8M22.500 .500V8" fill="none" stroke="currentColor" stroke-width="2.6" stroke-linejoin="round" stroke-linecap="butt"/><path d="M6.200 7.700H23.700" fill="none" stroke="currentColor" stroke-width="2.4" stroke-linejoin="round" stroke-linecap="butt"/>
<rect x="6.200" y="11.200" width="17.600" height="14.300" fill="currentColor"/>
<g fill="#fff"><rect x="10.600" y="12.700" width="2.800" height="2.800"/><rect x="15.100" y="12.700" width="2.800" height="2.800"/><rect x="19.600" y="12.700" width="2.800" height="2.800"/>
<rect x="10.600" y="17.200" width="2.800" height="2.800"/><rect x="15.100" y="17.200" width="2.800" height="2.800"/><rect x="19.600" y="17.200" width="2.800" height="2.800"/>
<rect x="10.600" y="21.600" width="2.800" height="2.800"/><rect x="15.100" y="21.600" width="2.800" height="2.800"/><rect x="19.600" y="21.600" width="2.800" height="2.800"/></g></svg>
<svg class="ti" style="left:1564px;top:22px;color:#c9c9c9" width="30" height="31" viewBox="0 0 30 31" overflow="visible"><path d="M8.800 7H4.800V19M20 7H24.400V19M11 24H18" fill="none" stroke="currentColor" stroke-width="1.5" stroke-linejoin="round" stroke-linecap="butt"/>
<rect x="8.800" y="2.400" width="11.300" height="9.200" rx="2" fill="#fff" stroke="currentColor" stroke-width="3"/>
<rect x="1.500" y="19.200" width="9.400" height="9.300" rx="2" fill="#fff" stroke="currentColor" stroke-width="3"/><rect x="18" y="19.200" width="9.600" height="9.300" rx="2" fill="#fff" stroke="currentColor" stroke-width="3"/></svg>
<svg class="ti" style="left:1621px;top:22px;color:#c9c9c9" width="30" height="31" viewBox="0 0 30 31" overflow="visible"><path d="M28.500 12V4.500a2 2 0 0 0-2-2H3.500a2 2 0 0 0-2 2v22a2 2 0 0 0 2 2H7.700" fill="none" stroke="currentColor" stroke-width="2.8" stroke-linejoin="round" stroke-linecap="butt"/><path d="M2 8h26" fill="none" stroke="currentColor" stroke-width="2.4" stroke-linejoin="round" stroke-linecap="butt"/>
<ellipse cx="19.800" cy="22.300" rx="10.600" ry="9.100" fill="#fff"/><ellipse cx="19.800" cy="22.300" rx="9.400" ry="7.900" fill="currentColor"/>
<path d="M18.300 26.500l6-8.500M12.500 24h2.300M25 24h2.300M19.800 15.500v2.300M14.300 18.300l1.500 1.500" fill="none" stroke="#fff" stroke-width="1.500"/></svg>
<svg class="ti" style="left:1665px;top:22px;color:#c9c9c9" width="30" height="31" viewBox="0 0 30 31" overflow="visible"><path d="M1.400 2.300H14.300V15H28.400V28.600H1.400z" fill="none" stroke="currentColor" stroke-width="2.8" stroke-linejoin="round" stroke-linecap="butt"/><path d="M1.400 15H14.300V28.600" fill="none" stroke="currentColor" stroke-width="2.8" stroke-linejoin="round" stroke-linecap="butt"/>
<path d="M21.300 1.300l6.500 6.500-6.500 6.500-6.500-6.500z" fill="#fff" stroke="currentColor" stroke-width="2.600" stroke-linejoin="miter"/></svg>
<svg class="ti" style="left:1707.7px;top:22px;color:#626262" width="30" height="31" viewBox="0 0 30 31" overflow="visible"><path d="M28.500 12.500V4.500a2 2 0 0 0-2-2H3.500a2 2 0 0 0-2 2v22a2 2 0 0 0 2 2H17.500" fill="none" stroke="currentColor" stroke-width="3" stroke-linejoin="round" stroke-linecap="butt"/>
<path d="M5.600 19.600l7.200-7.900 2.400 4.300 7-7" fill="none" stroke="currentColor" stroke-width="3.6" stroke-linejoin="round" stroke-linecap="butt"/><path d="M17 5.200h8.600v8.600z" fill="currentColor"/>
<text x="25" y="29.200" font-family="Liberation Sans" font-size="16" text-anchor="middle" fill="currentColor">S</text></svg>
<svg class="ti" style="left:1751px;top:22px;color:#626262" width="30" height="31" viewBox="0 0 30 31" overflow="visible"><path d="M28.500 12V4.500a2 2 0 0 0-2-2H3.500a2 2 0 0 0-2 2v22a2 2 0 0 0 2 2H12" fill="none" stroke="currentColor" stroke-width="3" stroke-linejoin="round" stroke-linecap="butt"/>
<path d="M8.700 14.300v9.600M14.900 6.600v13.100M21 11.200v4" fill="none" stroke="currentColor" stroke-width="2.6" stroke-linejoin="round" stroke-linecap="butt"/>
<path d="M14.300 29.200l1.400-5L25.500 14.500l3.800 3.800L19.500 28z" fill="#fff" stroke="currentColor" stroke-width="1.800"/><path d="M14.300 29.200l4.800-1.200-3.500-3.500z" fill="currentColor"/></svg>
<svg class="ti" style="left:1808px;top:22px;color:#626262" width="30" height="31" viewBox="0 0 30 31" overflow="visible"><rect x="1.500" y="2.500" width="27" height="27" rx="2.500" fill="none" stroke="currentColor" stroke-width="3" stroke-linejoin="round" stroke-linecap="butt"/>
<text x="15" y="22" font-family="Liberation Sans" font-size="19.500" text-anchor="middle" fill="#767676">?</text></svg>
</div>
<div style="position:absolute;left:0;top:0;width:1920px;height:1040px;will-change:transform">
<span class="t" style="left:37.40px;top:24px;font-size:18px;color:#1c1c1c;transform:scale(1.000,1.042);transform-origin:-1.00px 15px;letter-spacing:-0.331px;"><u>F</u>ile</span>
<span class="t" style="left:85.40px;top:24px;font-size:18px;color:#1c1c1c;transform:scale(1.000,1.042);transform-origin:-1.00px 15px;letter-spacing:-0.005px;"><u>E</u>dit</span>
<span class="t" style="left:137.40px;top:24px;font-size:18px;color:#1c1c1c;transform:scale(1.000,1.042);transform-origin:0.00px 15px;letter-spacing:-0.730px;"><u>V</u>iew</span>
<span class="t" style="left:194.90px;top:24px;font-size:18px;color:#1c1c1c;transform:scale(1.000,1.042);transform-origin:-1.00px 15px;letter-spacing:-0.837px;"><u>D</u>ata</span>
<span class="t" style="left:252.90px;top:24px;font-size:18px;color:#1c1c1c;transform:scale(1.000,1.042);transform-origin:0.00px 15px;letter-spacing:-0.128px;"><u>G</u>o To</span>
<span class="t" style="left:320.90px;top:24px;font-size:18px;color:#1c1c1c;transform:scale(1.000,1.042);transform-origin:-1.00px 15px;letter-spacing:0.327px;"><u>M</u>odules</span>
<span class="t" style="left:411.90px;top:24px;font-size:18px;color:#1c1c1c;transform:scale(1.000,1.042);transform-origin:0.00px 15px;letter-spacing:0.370px;"><u>T</u>ools</span>
<span class="t" style="left:476.40px;top:24px;font-size:18px;color:#1c1c1c;transform:scale(1.000,1.042);transform-origin:0.00px 15px;letter-spacing:0.096px;"><u>W</u>indow</span>
<span class="t" style="left:562.40px;top:24px;font-size:18px;color:#1c1c1c;transform:scale(1.000,1.042);transform-origin:-1.00px 15px;letter-spacing:0.330px;"><u>H</u>elp</span>
<span class="t" style="left:27.90px;top:144px;font-size:22.5px;color:#1c1c1c;transform:scale(1.000,1.059);transform-origin:-1.00px 18px;letter-spacing:-0.518px;">Pervasive Analytics</span>
<span class="t" style="left:901.90px;top:200px;font-size:28px;color:#151515;transform:scale(1.000,1.054);transform-origin:-2.00px 23px;letter-spacing:0.314px;">KPI Designer</span>
<span class="t" style="left:221.70px;top:308px;font-size:19.5px;color:#b8b8b8;transform:scale(1.000,1.058);transform-origin:0.00px 16px;letter-spacing:-0.148px;">Search</span>
<span class="t" style="left:244.90px;top:344px;font-size:18px;color:#4c4c4c;transform:scale(1.000,1.098);transform-origin:-1.00px 15px;letter-spacing:0.086px;font-weight:700;">User-Defined Query</span>
<span class="t" style="left:245.40px;top:389px;font-size:18px;color:#5c5c5c;transform:scale(1.000,1.098);transform-origin:0.00px 15px;letter-spacing:-0.180px;font-weight:700;">Calculation View</span>
<span class="t" style="left:260.40px;top:434px;font-size:18px;color:#4c4c4c;transform:scale(1.000,1.098);transform-origin:0.00px 15px;letter-spacing:-0.039px;font-weight:700;">Administration</span>
<span class="t" style="left:259.40px;top:479px;font-size:18px;color:#4c4c4c;transform:scale(1.000,1.098);transform-origin:-1.00px 15px;letter-spacing:0.108px;font-weight:700;">Purchasing</span>
<span class="t" style="left:261.40px;top:524px;font-size:18px;color:#4c4c4c;transform:scale(1.000,1.098);transform-origin:0.00px 15px;letter-spacing:-0.257px;font-weight:700;">Sales</span>
<span class="t" style="left:259.40px;top:569px;font-size:18px;color:#4c4c4c;transform:scale(1.000,1.098);transform-origin:-1.00px 15px;letter-spacing:0.165px;font-weight:700;">Banking</span>
<span class="t" style="left:260.40px;top:614px;font-size:18px;color:#4c4c4c;transform:scale(1.000,1.098);transform-origin:0.00px 15px;font-weight:700;">Customer Relationshi...</span>
<span class="t" style="left:259.40px;top:659px;font-size:18px;color:#4c4c4c;transform:scale(1.000,1.098);transform-origin:-1.00px 15px;letter-spacing:-0.113px;font-weight:700;">Financials</span>
<span class="t" style="left:259.40px;top:704px;font-size:18px;color:#4c4c4c;transform:scale(1.000,1.098);transform-origin:-1.00px 15px;font-weight:700;">Inventory</span>
<span class="t" style="left:260.40px;top:752px;font-size:18px;color:#505050;transform:scale(1.000,1.098);transform-origin:0.00px 15px;letter-spacing:0.183px;">Sales Installment</span>
<span class="t" style="left:260.40px;top:795px;font-size:18px;color:#505050;transform:scale(1.000,1.098);transform-origin:0.00px 15px;letter-spacing:0.096px;">Sales Item Lines</span>
<span class="t" style="left:637.40px;top:307px;font-size:19.5px;color:#2290d0;transform:scale(1.000,1.081);transform-origin:0.00px 16px;letter-spacing:0.111px;">Value Settings</span>
<span class="t" style="left:807.20px;top:307px;font-size:19.5px;color:#505050;transform:scale(1.000,1.081);transform-origin:-1.00px 16px;letter-spacing:-0.013px;">Filter and Parameter</span>
<span class="t" style="left:1028.70px;top:307px;font-size:19.5px;color:#505050;transform:scale(1.000,1.081);transform-origin:0.00px 16px;letter-spacing:0.339px;">Composite KPI</span>
<span class="t" style="left:727.10px;top:384px;font-size:20.5px;color:#333;transform:scale(1.000,1.042);transform-origin:0.00px 17px;letter-spacing:0.620px;">Accounts Payable</span>
<span class="t" style="left:1045.80px;top:384px;font-size:20.5px;color:#333;transform:scale(1.000,1.042);transform-origin:0.00px 17px;letter-spacing:0.855px;width:266.70px;overflow:hidden;">The Total Accounts Payable</span>
<span class="t" style="left:704.40px;top:455px;font-size:19.5px;color:#4e4e4e;transform:scale(1.000,1.118);transform-origin:0.00px 16px;letter-spacing:0.234px;font-weight:700;">Set KPI Value</span>
<span class="t" style="left:761.10px;top:509px;font-size:19.5px;color:#333;transform:scale(1.000,1.103);transform-origin:-1.00px 16px;letter-spacing:0.320px;">Life To Date (L...</span>
<span class="t" style="left:731.65px;top:556px;font-size:20px;color:#333;letter-spacing:1.494px;">Sum</span>
<span class="t" style="left:1049.90px;top:560px;font-size:19.5px;color:#c6c6c6;transform:scale(1.000,1.118);transform-origin:-1.00px 16px;letter-spacing:0.211px;">Drag Date Dimension Here</span>
<span class="t" style="left:717.00px;top:622px;font-size:19.5px;color:#444;transform:scale(1.000,1.118);transform-origin:-1.00px 16px;letter-spacing:0.180px;">Unit</span>
<span class="t" style="left:785.40px;top:619px;font-size:20px;color:#333;letter-spacing:1.124px;">Currency</span>
<span class="t" style="left:717.00px;top:658px;font-size:19.5px;color:#444;transform:scale(1.000,1.118);transform-origin:-1.00px 16px;letter-spacing:0.125px;">From Data Source:</span>
<span class="t" style="left:900.10px;top:658px;font-size:19.5px;color:#c9c9c9;transform:scale(1.000,1.118);transform-origin:0.00px 16px;letter-spacing:0.011px;font-style:italic;">KPI Balance Sheet Query</span>
<span class="t" style="left:704.80px;top:704px;font-size:19.5px;color:#4e4e4e;transform:scale(1.000,1.118);transform-origin:0.00px 16px;letter-spacing:0.017px;font-weight:700;">Set KPI Goal</span>
<span class="t" style="left:1183.10px;top:704px;font-size:19.5px;color:#2290d0;transform:scale(1.000,1.118);transform-origin:0.00px 16px;letter-spacing:0.008px;">Advanced Goal</span>
<span class="t" style="left:727.10px;top:747px;font-size:20.5px;color:#333;transform:scale(1.000,1.042);transform-origin:0.00px 17px;letter-spacing:1.236px;">The target value for this month</span>
<span class="t" style="left:727.90px;top:807px;font-size:20.5px;color:#333;transform:scale(0.936,1.042);transform-origin:0.00px 17px;">0</span>
<span class="t" style="left:704.40px;top:869px;font-size:19.5px;color:#4e4e4e;transform:scale(1.000,1.118);transform-origin:0.00px 16px;letter-spacing:0.211px;font-weight:700;">Set KPI Trend</span>
<span class="t" style="left:1174.40px;top:869px;font-size:19.5px;color:#2290d0;transform:scale(1.000,1.118);transform-origin:0.00px 16px;letter-spacing:0.022px;">Advanced Trend</span>
<span class="t" style="left:711.40px;top:912px;font-size:20px;color:#333;letter-spacing:1.129px;">Month-Over-Month Basis</span>
<span class="t" style="left:1384.10px;top:302px;font-size:20.5px;color:#656565;transform:scale(1.000,1.035);transform-origin:0.00px 17px;letter-spacing:0.561px;font-weight:700;">Accounts Payable</span>
<span class="t" style="left:1420.70px;top:409px;font-size:54px;color:#e0390d;transform:scale(1.000,1.109);transform-origin:-2.00px 46px;letter-spacing:1.225px;">71.53</span>
<span class="t" style="left:1561.70px;top:425px;font-size:36px;color:#e0390d;transform:scale(0.968,1.000);transform-origin:-2.00px 30px;">K</span>
<span class="t" style="left:1421.90px;top:465px;font-size:16.5px;color:#9a9a9a;transform:scale(1.022,1.000);transform-origin:0.00px 14px;">$</span>
<span class="t" style="left:1384.20px;top:497px;font-size:18px;color:#a8a8a8;transform:scale(1.000,1.106);transform-origin:0.00px 15px;letter-spacing:0.191px;">06/15/2017</span>
<span class="t" style="left:1633.20px;top:497px;font-size:18px;color:#a8a8a8;transform:scale(1.000,1.106);transform-origin:0.00px 15px;letter-spacing:-0.811px;">0%</span>
<span class="t" style="left:1384.20px;top:554px;font-size:18px;color:#2290d0;transform:scale(1.000,1.090);transform-origin:0.00px 15px;letter-spacing:0.196px;">Status Displaying</span>
<span class="t" style="left:1598.40px;top:554px;font-size:18px;color:#2290d0;transform:scale(1.000,1.090);transform-origin:0.00px 15px;letter-spacing:0.219px;">Action (0)</span>
<span class="t" style="left:910.40px;top:971px;font-size:18px;color:#222;transform:scale(1.000,1.066);transform-origin:0.00px 15px;letter-spacing:0.836px;">06/15/2017</span>
<span class="t" style="left:935.80px;top:1002px;font-size:18px;color:#222;transform:scale(1.000,1.066);transform-origin:0.00px 15px;letter-spacing:0.617px;">08:45</span>
<span class="t" style="left:1738.40px;top:975px;font-size:40px;color:#9b9b9b;transform:scale(1.000,1.054);transform-origin:-1.00px 34px;letter-spacing:-6.283px;font-weight:700;-webkit-text-stroke:1.6px #9b9b9b;">SAP</span>
<span class="t" style="left:1811.40px;top:978px;font-size:13.5px;color:#a9a9a9;transform:scale(1.000,1.034);transform-origin:-1.00px 11px;letter-spacing:1.139px;">Business</span>
<span class="t" style="left:1811.90px;top:990px;font-size:23.5px;color:#f0a822;transform:scale(1.000,1.051);transform-origin:0.00px 19px;letter-spacing:0.683px;font-weight:700;-webkit-text-stroke:0.7px #f0a822;">One</span>
</div>
</body></html>
